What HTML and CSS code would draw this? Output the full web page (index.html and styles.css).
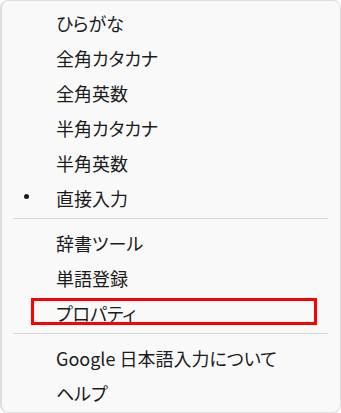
FILE: index.html
```html
<!DOCTYPE html>
<html lang="ja">
<head>
  <meta charset="UTF-8">
  <meta name="viewport" content="width=device-width, initial-scale=1.0">
  <title>入力モード メニュー</title>
  <link rel="stylesheet" href="styles.css">
</head>
<body>
  <div class="menu">
    <ul class="menu-group">
      <li class="menu-item">ひらがな</li>
      <li class="menu-item">全角カタカナ</li>
      <li class="menu-item">全角英数</li>
      <li class="menu-item">半角カタカナ</li>
      <li class="menu-item">半角英数</li>
      <li class="menu-item checked">直接入力</li>
    </ul>
    <hr class="separator">
    <ul class="menu-group">
      <li class="menu-item">辞書ツール</li>
      <li class="menu-item">単語登録</li>
      <li class="menu-item marked">プロパティ</li>
    </ul>
    <hr class="separator">
    <ul class="menu-group">
      <li class="menu-item">Google 日本語入力について</li>
      <li class="menu-item">ヘルプ</li>
    </ul>
  </div>
</body>
</html>
```

FILE: styles.css
```css
body {
  margin: 0;
  background-color: #ffffff;
  font-family: "Noto Sans CJK JP", "Noto Sans", sans-serif;
}

.menu {
  width: 341px;
  height: 413px;
  box-sizing: border-box;
  padding: 4px 0 3px;
  background-color: #f9f9f9;
  border: 1px solid #dedede;
  border-left-width: 2px;
  border-radius: 8px;
}

.menu-group {
  list-style: none;
  margin: 0;
  padding: 0;
}

.menu-item {
  position: relative;
  height: 35px;
  display: flex;
  align-items: center;
  padding-left: 54px;
  font-size: 18px;
  color: #1b1b1b;
  font-feature-settings: "palt";
}

/* current mode dot */
.menu-item.checked::before {
  content: "";
  position: absolute;
  left: 22px;
  top: 14px;
  width: 5px;
  height: 5px;
  border-radius: 50%;
  background-color: #1b1b1b;
}

/* red annotation frame */
.menu-item.marked::after {
  content: "";
  position: absolute;
  left: 29px;
  top: 3px;
  width: 280px;
  height: 21px;
  border: 3px solid #ff0000;
}

.separator {
  margin: 3px 12px 6px 11px;
  border: 0;
  border-top: 1px solid #d6d6d6;
}
```
